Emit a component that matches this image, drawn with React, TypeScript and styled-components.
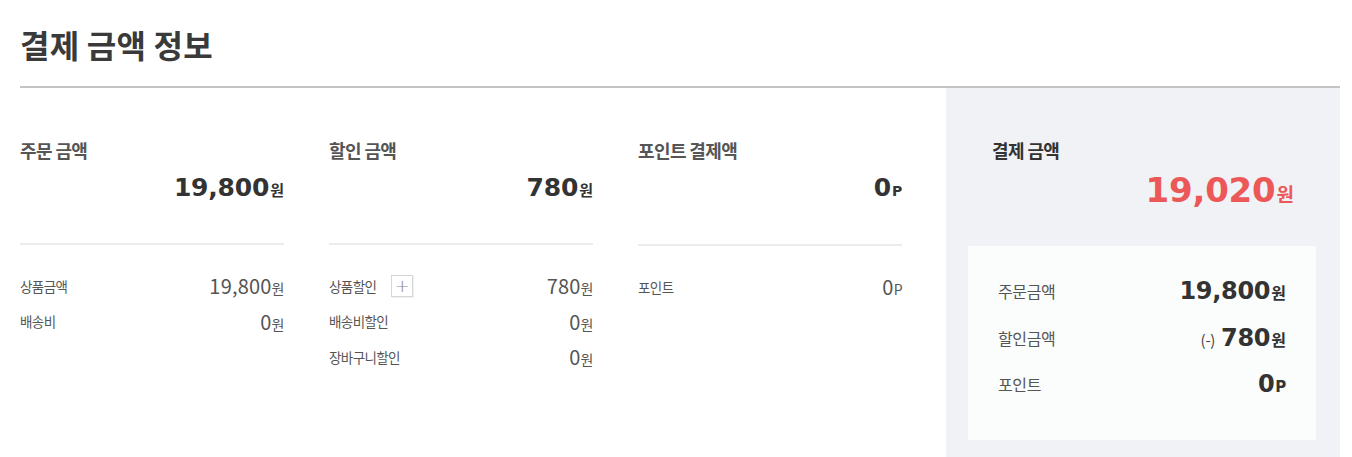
import styled, { createGlobalStyle } from "styled-components";

const GlobalStyle = createGlobalStyle`
    body {
        margin: 0;
        background: #ffffff;
        font-family: "Noto Sans CJK KR", "Noto Sans", sans-serif;
        color: #333;
    }
`;

const Wrapper = styled.div`
    padding: 0 12px 0 20px;
    width: 1352px;
    box-sizing: border-box;
`;

const Header = styled.header`
    height: 86px;
    display: flex;
    align-items: center;
    border-bottom: 2px solid #c4c4c4;
`;

const Title = styled.h2`
    margin: 0;
    font-size: 32px;
    font-weight: 700;
    color: #3a3a3a;
    letter-spacing: 0.2px;
    line-height: 1;
    transform: translateY(1px);
`;

const Body = styled.div`
    display: grid;
    grid-template-columns: 264px 264px 264px 1fr;
    column-gap: 45px;
`;

const Column = styled.section`
    padding-top: 50px;
`;

const ColumnTitle = styled.h3<{ $color?: string }>`
    margin: 0;
    font-size: 18px;
    line-height: 24px;
    font-weight: 700;
    color: ${(p) => p.$color || "#555"};
    letter-spacing: -0.6px;
`;

const Amount = styled.div<{ $color?: string; $size?: number }>`
    margin-top: 10px;
    display: flex;
    justify-content: flex-end;
    align-items: baseline;
    line-height: 32px;
    font-family: "DejaVu Sans", sans-serif;
    font-weight: 700;
    font-size: ${(p) => p.$size || 25}px;
    color: ${(p) => p.$color || "#333"};
    letter-spacing: -0.2px;
`;

const Unit = styled.span<{ $size?: number }>`
    font-family: "Noto Sans CJK KR", sans-serif;
    font-size: ${(p) => p.$size || 15}px;
    font-weight: 700;
    margin-left: 1px;
    letter-spacing: 0;
`;

const PointUnit = styled.span<{ $size?: number }>`
    font-family: "DejaVu Sans", sans-serif;
    font-size: ${(p) => p.$size || 14}px;
    font-weight: 700;
    margin-left: 1px;
`;

const Divider = styled.hr`
    margin: 37px 0 0;
    border: 0;
    height: 2px;
    background: #ececec;
`;

const DetailList = styled.ul`
    list-style: none;
    margin: 23px 0 0;
    padding: 0;
`;

const DetailRow = styled.li`
    display: flex;
    justify-content: space-between;
    align-items: center;
    height: 35.5px;
`;

const Label = styled.span`
    display: flex;
    align-items: center;
    font-size: 13.5px;
    color: #555;
    letter-spacing: -0.6px;
`;

const Value = styled.span`
    font-size: 20px;
    color: #555;
    font-weight: 400;
    letter-spacing: 0.2px;
`;

const SmallUnit = styled.span`
    font-size: 14px;
    letter-spacing: -0.5px;
`;

const PlusButton = styled.button`
    width: 22px;
    height: 22px;
    margin-left: 15px;
    padding: 0;
    border: 1px solid #d6d6d6;
    background: #fff;
    color: #888;
    font-size: 18px;
    line-height: 18px;
    font-family: "DejaVu Sans", sans-serif;
    font-weight: 300;
    display: flex;
    align-items: center;
    justify-content: center;
    box-shadow: 1px 1px 1px rgba(0, 0, 0, 0.05);
`;

const Panel = styled.aside`
    background: #f1f2f6;
    padding: 50px 24px 19px 22px;
    margin-left: -1px;
`;

const PanelHead = styled.div`
    padding: 0 22px 0 24px;
`;

const PanelAmount = styled(Amount)`
    line-height: 40px;
    margin-top: 8px;
`;

const Summary = styled.div`
    margin-top: 32px;
    background: #fbfcfc;
    padding: 22px 30px 32px;
`;

const SummaryRow = styled.div`
    display: flex;
    justify-content: space-between;
    align-items: center;
    height: 46.5px;
`;

const SummaryLabel = styled.span`
    font-size: 16px;
    color: #555;
    letter-spacing: -0.4px;
`;

const SummaryValue = styled.span`
    display: flex;
    align-items: baseline;
    font-family: "DejaVu Sans", sans-serif;
    font-size: 24px;
    font-weight: 700;
    color: #333;
    letter-spacing: -0.3px;
`;

const Minus = styled.span`
    font-family: "Noto Sans CJK KR", sans-serif;
    font-size: 15px;
    font-weight: 400;
    color: #444;
    margin-right: 6px;
`;

type Detail = { label: string; value: string; unit: string; plus?: boolean };

const columns: { title: string; amount: string; unit: string; details: Detail[] }[] = [
    {
        title: "주문 금액",
        amount: "19,800",
        unit: "원",
        details: [
            { label: "상품금액", value: "19,800", unit: "원" },
            { label: "배송비", value: "0", unit: "원" },
        ],
    },
    {
        title: "할인 금액",
        amount: "780",
        unit: "원",
        details: [
            { label: "상품할인", value: "780", unit: "원", plus: true },
            { label: "배송비할인", value: "0", unit: "원" },
            { label: "장바구니할인", value: "0", unit: "원" },
        ],
    },
    {
        title: "포인트 결제액",
        amount: "0",
        unit: "P",
        details: [{ label: "포인트", value: "0", unit: "P" }],
    },
];

function App() {
    return (
        <Wrapper>
            <GlobalStyle />
            <Header>
                <Title>결제 금액 정보</Title>
            </Header>
            <Body>
                {columns.map((col) => (
                    <Column key={col.title}>
                        <ColumnTitle>{col.title}</ColumnTitle>
                        <Amount>
                            {col.amount}
                            {col.unit === "P" ? <PointUnit>P</PointUnit> : <Unit>{col.unit}</Unit>}
                        </Amount>
                        <Divider />
                        <DetailList>
                            {col.details.map((d) => (
                                <DetailRow key={d.label}>
                                    <Label>
                                        {d.label}
                                        {d.plus && <PlusButton>+</PlusButton>}
                                    </Label>
                                    <Value>
                                        {d.value}
                                        <SmallUnit>{d.unit}</SmallUnit>
                                    </Value>
                                </DetailRow>
                            ))}
                        </DetailList>
                    </Column>
                ))}
                <Panel>
                    <PanelHead>
                        <ColumnTitle $color="#333">결제 금액</ColumnTitle>
                        <PanelAmount $color="#ec5858" $size={34}>
                            19,020
                            <Unit $size={19}>원</Unit>
                        </PanelAmount>
                    </PanelHead>
                    <Summary>
                        <SummaryRow>
                            <SummaryLabel>주문금액</SummaryLabel>
                            <SummaryValue>
                                19,800<Unit $size={16}>원</Unit>
                            </SummaryValue>
                        </SummaryRow>
                        <SummaryRow>
                            <SummaryLabel>할인금액</SummaryLabel>
                            <SummaryValue>
                                <Minus>(-)</Minus>780<Unit $size={16}>원</Unit>
                            </SummaryValue>
                        </SummaryRow>
                        <SummaryRow>
                            <SummaryLabel>포인트</SummaryLabel>
                            <SummaryValue>
                                0<PointUnit $size={15}>P</PointUnit>
                            </SummaryValue>
                        </SummaryRow>
                    </Summary>
                </Panel>
            </Body>
        </Wrapper>
    );
}

export default App;
